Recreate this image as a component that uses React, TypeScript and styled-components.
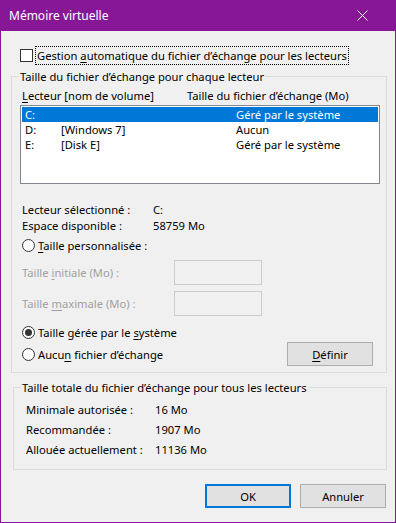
import React from 'react';
import styled, { createGlobalStyle } from 'styled-components';

const GlobalStyle = createGlobalStyle`
  html, body { margin: 0; padding: 0; background: #f0f0f0; }
  body {
    font-family: 'Noto Sans', 'Segoe UI', sans-serif;
    font-size: 11.2px;
    color: #000;
  }
  * { box-sizing: border-box; }
`;

const ACCENT = '#881798';

const Window = styled.div`
  width: 396px;
  height: 523px;
  border: 1px solid ${ACCENT};
  border-top: none;
  background: #f0f0f0;
  display: flex;
  flex-direction: column;
`;

const TitleBar = styled.div`
  height: 31px;
  margin: 0 -1px;
  padding-left: 9px;
  background: ${ACCENT};
  color: #fff;
  font-size: 12px;
  display: flex;
  align-items: center;
  justify-content: space-between;
`;

const CloseIcon = styled.svg`
  width: 11px;
  height: 11px;
  margin-right: 28px;
`;

const Body = styled.div`
  flex: 1;
  padding: 16px 8px 0 10px;
  display: flex;
  flex-direction: column;
`;

const CheckRow = styled.label`
  display: flex;
  align-items: center;
  height: 17px;
  margin-left: 9px;
`;

const CheckBox = styled.span`
  width: 13px;
  height: 13px;
  border: 1px solid #333;
  background: #fff;
  margin-right: 3px;
  flex: none;
`;

const Focus = styled.span`
  outline: 1px dotted #000;
  outline-offset: 0;
  padding: 0 1px;
  line-height: 17px;
`;

const Group = styled.fieldset<{ $indent: number; $top: number }>`
  margin: ${(p) => p.$top}px 0 0 ${(p) => p.$indent}px;
  padding: 0 8px;
  border: 1px solid #dcdcdc;
  min-width: 0;
  display: flex;
  flex-direction: column;
`;

const Legend = styled.legend`
  padding: 0 1px;
  margin-left: -1px;
  line-height: 15px;
`;

const HeaderRow = styled.div`
  display: grid;
  grid-template-columns: 165px 1fr;
  line-height: 15px;
  margin-top: 4px;
  padding-left: 2px;
`;

const ListBox = styled.div`
  width: 360px;
  height: 79px;
  margin-top: 2px;
  border: 1px solid #828790;
  background: #fff;
  padding: 1px;
`;

const ListRow = styled.div<{ $selected?: boolean }>`
  display: grid;
  grid-template-columns: 36px 175px 1fr;
  height: 15px;
  line-height: 15px;
  padding-left: 3px;
  background: ${(p) => (p.$selected ? '#0078d7' : 'transparent')};
  color: ${(p) => (p.$selected ? '#fff' : '#000')};
`;

const InfoRow = styled.div<{ $top: number }>`
  display: grid;
  grid-template-columns: 131px 1fr;
  line-height: 16px;
  margin-top: ${(p) => p.$top}px;
  padding-left: 2px;
`;

const RadioRow = styled.label<{ $top?: number }>`
  display: flex;
  align-items: center;
  height: 17px;
  margin-top: ${(p) => p.$top ?? 0}px;
  padding-left: 2px;
`;

const Radio = styled.span<{ $checked?: boolean }>`
  width: 13px;
  height: 13px;
  border: 1px solid #333;
  border-radius: 50%;
  background: #fff;
  margin-right: 3px;
  flex: none;
  display: flex;
  align-items: center;
  justify-content: center;
  &::after {
    content: '';
    display: ${(p) => (p.$checked ? 'block' : 'none')};
    width: 7px;
    height: 7px;
    border-radius: 50%;
    background: #333;
  }
`;

const FieldRow = styled.div<{ $top: number }>`
  display: grid;
  grid-template-columns: 152px 88px;
  align-items: center;
  margin-top: ${(p) => p.$top}px;
  padding-left: 2px;
  color: #a0a0a0;
`;

const TextBox = styled.div`
  height: 25px;
  border: 1px solid #cccccc;
  background: #f0f0f0;
`;

const ChoiceGrid = styled.div`
  display: grid;
  grid-template-columns: 1fr 86px;
  grid-template-rows: 17px 24px;
  row-gap: 1px;
  align-items: center;
  margin: 8px 5px 6px 0;

  & > ${RadioRow} {
    grid-column: 1;
  }
`;

const ChoiceButton = styled.div`
  grid-column: 2;
  grid-row: 2;
`;

const Button = styled.button<{ $default?: boolean }>`
  width: 86px;
  height: 24px;
  font: inherit;
  color: #000;
  background: #e1e1e1;
  border: ${(p) => (p.$default ? '2px solid #0078d7' : '1px solid #adadad')};
  padding: 0;
  margin: 0;
  display: block;
`;

const TotalRow = styled.div`
  display: grid;
  grid-template-columns: 129px 1fr;
  line-height: 20px;
  padding-left: 4px;
`;

const TotalList = styled.div`
  display: flex;
  flex-direction: column;
  padding: 5px 0 9px;
`;

const Footer = styled.div`
  display: flex;
  justify-content: flex-end;
  gap: 9px;
  margin-top: 14px;
  padding-right: 1px;
`;

const Key = styled.u`
  text-decoration: underline;
  text-underline-offset: 2px;
`;

export default function App() {
  return (
    <>
      <GlobalStyle />
      <Window>
        <TitleBar>
          <span>Mémoire virtuelle</span>
          <CloseIcon viewBox="0 0 11 11">
            <path d="M0.5 0.5 L10.5 10.5 M10.5 0.5 L0.5 10.5" stroke="#fff" strokeWidth="1" />
          </CloseIcon>
        </TitleBar>
        <Body>
          <CheckRow>
            <CheckBox />
            <Focus>
              Gestion <Key>a</Key>utomatique du fichier d’échange pour les lecteurs
            </Focus>
          </CheckRow>

          <Group $indent={0} $top={5}>
            <Legend>Taille du fichier d’échange pour chaque lecteur</Legend>
            <HeaderRow>
              <span>
                <Key>L</Key>ecteur [nom de volume]
              </span>
              <span>Taille du fichier d’échange (Mo)</span>
            </HeaderRow>
            <ListBox>
              <ListRow $selected>
                <span>C:</span>
                <span />
                <span>Géré par le système</span>
              </ListRow>
              <ListRow>
                <span>D:</span>
                <span>[Windows 7]</span>
                <span>Aucun</span>
              </ListRow>
              <ListRow>
                <span>E:</span>
                <span>[Disk E]</span>
                <span>Géré par le système</span>
              </ListRow>
            </ListBox>

            <InfoRow $top={18}>
              <span>Lecteur sélectionné :</span>
              <span>C:</span>
            </InfoRow>
            <InfoRow $top={0}>
              <span>Espace disponible :</span>
              <span>58759 Mo</span>
            </InfoRow>

            <RadioRow $top={3}>
              <Radio />
              <span>
                <Key>T</Key>aille personnalisée :
              </span>
            </RadioRow>

            <FieldRow $top={6}>
              <span>
                Taille <Key>i</Key>nitiale (Mo) :
              </span>
              <TextBox />
            </FieldRow>
            <FieldRow $top={6}>
              <span>
                Taille <Key>m</Key>aximale (Mo) :
              </span>
              <TextBox />
            </FieldRow>

            <ChoiceGrid>
              <RadioRow>
                <Radio $checked />
                <span>
                  Taille gérée par le <Key>s</Key>ystème
                </span>
              </RadioRow>
              <RadioRow>
                <Radio />
                <span>
                  Aucu<Key>n</Key> fichier d’échange
                </span>
              </RadioRow>
              <ChoiceButton>
                <Button>
                  <Key>D</Key>éfinir
                </Button>
              </ChoiceButton>
            </ChoiceGrid>
          </Group>

          <Group $indent={2} $top={7}>
            <Legend>Taille totale du fichier d’échange pour tous les lecteurs</Legend>
            <TotalList>
              <TotalRow>
                <span>Minimale autorisée :</span>
                <span>16 Mo</span>
              </TotalRow>
              <TotalRow>
                <span>Recommandée :</span>
                <span>1907 Mo</span>
              </TotalRow>
              <TotalRow>
                <span>Allouée actuellement :</span>
                <span>11136 Mo</span>
              </TotalRow>
            </TotalList>
          </Group>

          <Footer>
            <Button $default>OK</Button>
            <Button>Annuler</Button>
          </Footer>
        </Body>
      </Window>
    </>
  );
}
